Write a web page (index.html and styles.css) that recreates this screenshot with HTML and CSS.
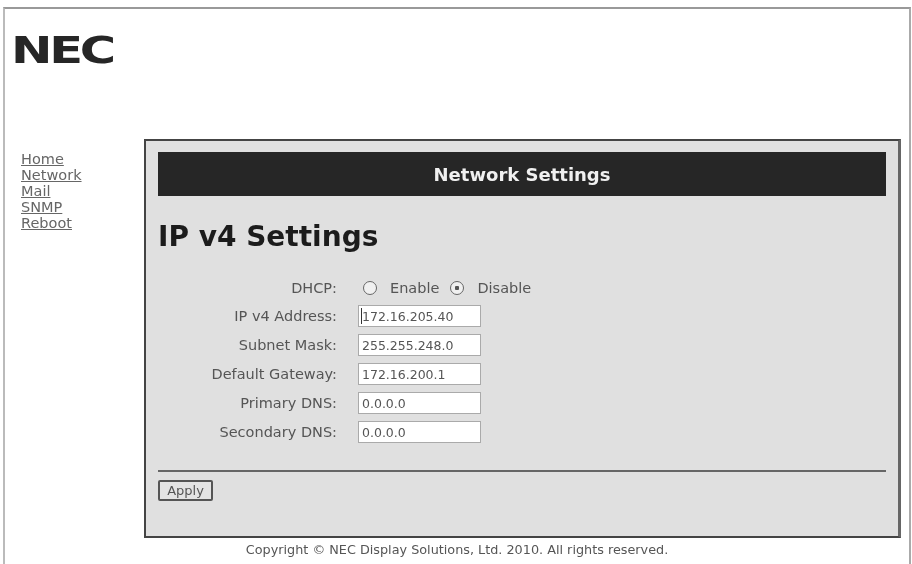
FILE: index.html
```html
<!DOCTYPE html>
<html lang="en">
<head>
    <meta charset="UTF-8">
    <title>Network Settings</title>
    <link rel="stylesheet" href="styles.css">
</head>
<body>

<div class="frame">
    <div class="logo"><span>NEC</span></div>

    <div class="main">
        <ul class="nav">
            <li><a href="#">Home</a></li>
            <li><a href="#">Network</a></li>
            <li><a href="#">Mail</a></li>
            <li><a href="#">SNMP</a></li>
            <li><a href="#">Reboot</a></li>
        </ul>

        <div class="panel">
            <div class="panel-title">Network Settings</div>
            <h1>IP v4 Settings</h1>

            <form class="settings">
                <label>DHCP:</label>
                <div class="radios">
                    <input type="radio" name="dhcp" id="dhcpOn">
                    <label for="dhcpOn">Enable</label>
                    <input type="radio" name="dhcp" id="dhcpOff" checked>
                    <label for="dhcpOff">Disable</label>
                </div>
                <label>IP v4 Address:</label>
                <div class="field">
                    <input type="text" value="172.16.205.40">
                    <span class="caret"></span>
                </div>
                <label>Subnet Mask:</label>
                <input type="text" value="255.255.248.0">
                <label>Default Gateway:</label>
                <input type="text" value="172.16.200.1">
                <label>Primary DNS:</label>
                <input type="text" value="0.0.0.0">
                <label>Secondary DNS:</label>
                <input type="text" value="0.0.0.0">
            </form>

            <hr>
            <button type="button" class="apply">Apply</button>
        </div>
    </div>

    <div class="copyright">Copyright &copy; NEC Display Solutions, Ltd. 2010. All rights reserved.</div>
</div>

</body>
</html>
```

FILE: styles.css
```css
html, body {
    margin: 0;
    height: 564px;
    overflow: hidden;
    background-color: #fff;
}
body {
    font-family: "DejaVu Sans", Verdana, sans-serif;
    color: #555;
    padding: 7px 1px 0 3px;
    box-sizing: border-box;
}
.frame {
    border-style: solid;
    border-color: #999 #aaa #aaa #bbb;
    border-width: 2px 2px 0 2px;
    height: 557px;
    box-sizing: border-box;
    filter: blur(0.45px);
}
.logo {
    height: 130px;
    padding: 20px 0 0 6px;
    box-sizing: border-box;
    font-weight: bold;
    font-size: 37px;
    line-height: 44px;
    letter-spacing: -2.5px;
    color: #262626;
}
.logo span {
    display: inline-block;
    transform: scaleX(1.34);
    transform-origin: 0 0;
}
.main {
    display: flex;
    align-items: flex-start;
}
.nav {
    list-style-type: none;
    margin: 12px 0 0 0;
    padding: 0 0 0 16px;
    width: 139px;
    flex-shrink: 0;
    box-sizing: border-box;
    font-size: 14.5px;
    line-height: 16px;
}
.nav a {
    color: #666;
}
.panel {
    width: 757px;
    height: 399px;
    box-sizing: border-box;
    background-color: #e0e0e0;
    border-style: solid;
    border-color: #444 #666 #444 #444;
    border-width: 2px 3px 2px 2px;
    padding: 11px 12px 0 12px;
}
.panel-title {
    height: 44px;
    line-height: 45px;
    background-color: #262626;
    color: #f0f0f0;
    font-weight: bold;
    font-size: 18px;
    text-align: center;
}
h1 {
    margin: 23px 0 23px 0;
    font-size: 28px;
    line-height: 36px;
    color: #1c1c1c;
}
.settings {
    display: grid;
    grid-template-columns: 179px 124px;
    column-gap: 21px;
    row-gap: 7px;
    align-items: center;
    font-size: 14.5px;
}
.settings > label {
    text-align: right;
}
.radios {
    display: flex;
    align-items: center;
    white-space: nowrap;
    height: 20px;
}
.radios input {
    appearance: none;
    margin: 0 13px 0 5px;
    width: 14px;
    height: 14px;
    flex-shrink: 0;
    background-color: #f0f0f0;
    border: 1px solid #666;
    border-radius: 50%;
}
.radios input:checked {
    background: radial-gradient(circle, #555 0 2px, #f0f0f0 2.5px);
}
.radios label {
    margin-right: 6px;
}
.field {
    position: relative;
}
.caret {
    position: absolute;
    left: 3px;
    top: 3px;
    height: 16px;
    border-left: 1px solid #333;
}
.settings input[type="text"] {
    display: block;
    width: 123px;
    height: 22px;
    box-sizing: border-box;
    padding: 0 3px;
    font-family: "DejaVu Sans", sans-serif;
    font-size: 12.5px;
    color: #555;
    background-color: #fff;
    border: 1px solid #aaa;
    border-radius: 0;
}
hr {
    margin: 27px 0 0 0;
    border: none;
    border-top: 2px solid #666;
}
.apply {
    display: block;
    margin-top: 8px;
    width: 55px;
    height: 21px;
    padding: 0;
    font-family: "DejaVu Sans", sans-serif;
    font-size: 13px;
    color: #555;
    background-color: #e4e4e4;
    border: 2px solid #555;
    border-radius: 2px;
    cursor: pointer;
}
.copyright {
    margin-top: 3px;
    text-align: center;
    font-size: 12.8px;
    line-height: 18px;
    color: #555;
}
```
